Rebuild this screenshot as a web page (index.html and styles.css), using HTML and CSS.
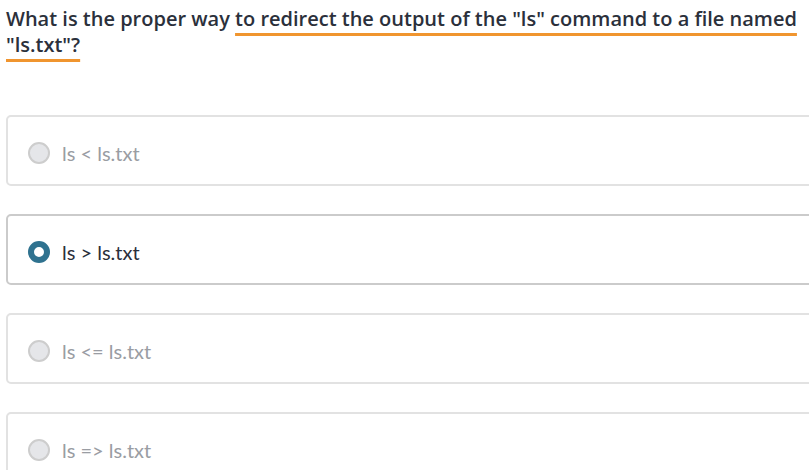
FILE: index.html
```html
<!DOCTYPE html>
<html>
<head>
<meta charset="utf-8">
<link rel="stylesheet" href="styles.css">
</head>
<body>
<div class="quiz">
  <h1 class="question">What is the proper way <span class="hl">to redirect the output of the "ls" command to a file named "ls.txt"?</span></h1>
  <div class="options">
    <label class="option"><span class="radio"></span><span class="text">ls &lt; ls.txt</span></label>
    <label class="option selected"><span class="radio"></span><span class="text">ls &gt; ls.txt</span></label>
    <label class="option"><span class="radio"></span><span class="text">ls &lt;= ls.txt</span></label>
    <label class="option"><span class="radio"></span><span class="text">ls =&gt; ls.txt</span></label>
  </div>
</div>
</body>
</html>
```
FILE: styles.css
```css
html, body {
  margin: 0;
  padding: 0;
  background: #fff;
  overflow: hidden;
}
.quiz {
  width: 840px;
  padding: 6px 0 0 6px;
}
.question {
  margin: 0;
  font-family: "Open Sans", sans-serif;
  font-weight: 600;
  font-size: 20px;
  line-height: 26px;
  color: #2b303b;
  width: 800px;
}
.hl {
  text-decoration: underline;
  text-decoration-color: #f0952f;
  text-decoration-thickness: 3px;
  text-underline-offset: 7px;
}
.options {
  margin-top: 57px;
  display: flex;
  flex-direction: column;
  gap: 28px;
}
.option {
  display: flex;
  align-items: center;
  height: 71px;
  box-sizing: border-box;
  border: 2px solid #e2e2e2;
  border-radius: 5px;
  padding-left: 20px;
  padding-top: 4px;
  font-family: Lato, sans-serif;
  font-size: 20px;
  color: #9a9da3;
}
.option.selected {
  border-color: #cbcbcb;
  color: #2b303b;
}
.radio {
  width: 22px;
  height: 22px;
  box-sizing: border-box;
  border-radius: 50%;
  background: #e5e6e9;
  border: 2px solid #cdcdcd;
  margin-right: 12px;
}
.option.selected .radio {
  background: #fff;
  border: 6px solid #2f728f;
}
```
